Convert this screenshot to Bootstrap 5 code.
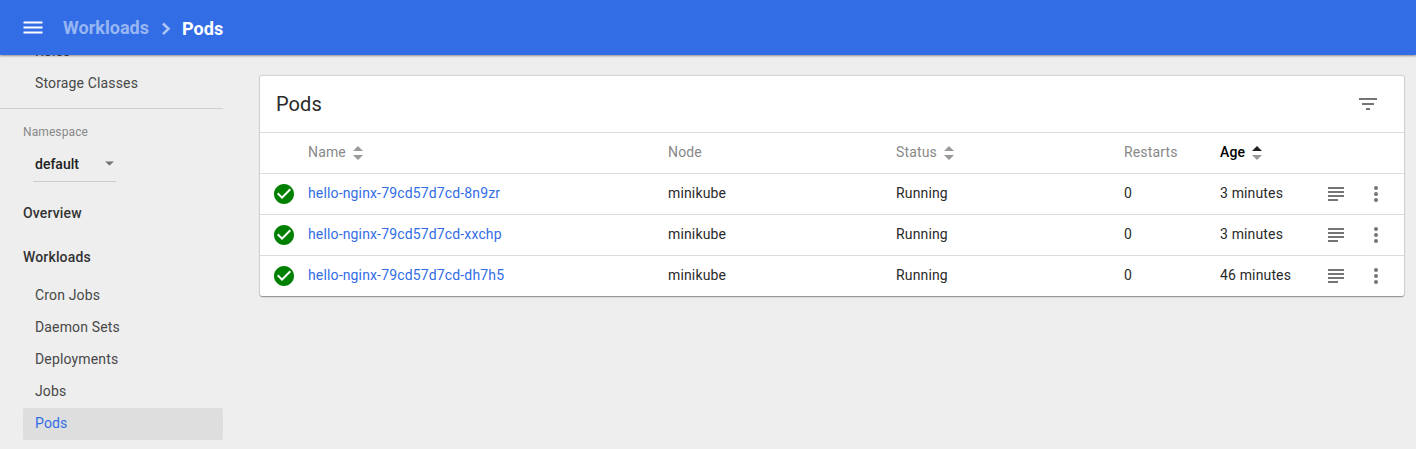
<!DOCTYPE html>
<html lang="en">
<head>
<meta charset="utf-8">
<meta name="viewport" content="width=device-width, initial-scale=1">
<title>Pods</title>
<link rel="stylesheet" href="https://cdn.jsdelivr.net/npm/bootstrap@5.3.0/dist/css/bootstrap.min.css">
<style>
body{font-family:Roboto,sans-serif;font-size:14px;line-height:20px;letter-spacing:.15px;background:#eee;color:#2a2a2a;height:100vh}
a{text-decoration:none;color:#326de6}
svg{display:block;flex:none}
.topbar{height:55px;background:#326de6;box-shadow:0 1px 2px rgba(0,0,0,.4);font-size:18px;font-weight:700;letter-spacing:.03px;padding-left:21px}
.topbar .parent-crumb{color:rgba(255,255,255,.5);margin-left:18px}
.topbar .crumb-arrow{margin:3px 5px 0 8px}
.topbar .this-crumb{padding-top:2px}
.side{width:223px;padding-left:23px;margin-top:-19px}
.side-item{height:32px;padding:0 0 2px 12px;color:#484848;border-radius:2px}
.side-item.active{background:#dedede;color:#326de6}
.side-head{font-weight:500;height:44px;color:#333;padding-bottom:2px}
.side-rule{height:1px;background:#d0d0d0;margin:8px 0 13px -23px}
.ns-label{font-size:12px;line-height:20px;letter-spacing:.1px;color:#888}
.ns-select{width:83px;height:40px;margin-left:10px;padding:4px 2px 0 2px;border-bottom:1px solid #ccc;font-weight:500;letter-spacing:0;color:#212121}
.side-gap{height:10px}
.panel{margin:21px 12px 0 37px;background:#fff;border-radius:2px;box-shadow:0 0 1px 1px rgba(0,0,0,.12),0 1px 1px 0 rgba(0,0,0,.25),0 2px 2px -1px rgba(0,0,0,.12)}
.panel-title{height:56px;padding:0 24px 0 16px;font-size:20px;letter-spacing:.1px}
.pod-row{display:grid;grid-template-columns:48px 360px 228px 228px 96px 104px 1fr;align-items:center;height:41px;border-top:1px solid #ddd;padding-bottom:2px}
.pod-row .state{margin:1px 0 0 12px}
.pod-row .actions{gap:30px;padding:2px 0 0 4px}
.col-title{color:#888}
.sorter{margin:1px 0 0 7px}
</style>
<script defer src="https://cdn.jsdelivr.net/npm/bootstrap@5.3.0/dist/js/bootstrap.bundle.min.js"></script>
</head>
<body class="d-flex flex-column overflow-hidden">
<svg class="d-none">
  <symbol id="ok" viewBox="0 0 24 24"><path fill="#008000" d="M12 2C6.480 2 2 6.480 2 12s4.480 10 10 10 10-4.480 10-10S17.520 2 12 2zm-2 15l-5-5 1.410-1.410L10 14.170l7.590-7.590L19 8l-9 9z"/></symbol>
  <symbol id="logs" viewBox="0 0 16 14"><path fill="#757575" d="M0 0h16v2H0zM0 4h16v2H0zM0 8h16v2H0zM0 12h10v2H0z"/></symbol>
  <symbol id="more" viewBox="0 0 4 16"><g fill="#757575"><circle cx="2" cy="2" r="2"/><circle cx="2" cy="8" r="2"/><circle cx="2" cy="14" r="2"/></g></symbol>
  <symbol id="down" viewBox="0 0 10 5"><path d="M0 0l5 5 5-5z"/></symbol>
</svg>
<header class="topbar d-flex align-items-center flex-shrink-0 position-relative z-1">
  <svg width="24" height="24" viewBox="0 0 24 24"><path fill="#fff" d="M2.500 17.500h19v-2h-19zm0-5h19v-2h-19zm0-5h19v-2h-19z"/></svg>
  <a href="#" class="parent-crumb">Workloads</a>
  <svg class="crumb-arrow" width="20" height="20" viewBox="0 0 20 20"><path fill="none" stroke="#fff" stroke-opacity=".6" stroke-width="2.600" d="M6 4.500l5.500 5.300L6 15.100"/></svg>
  <span class="this-crumb text-white">Pods</span>
</header>
<div class="d-flex flex-grow-1">
  <nav class="side flex-shrink-0">
    <a href="#" class="side-item d-flex align-items-center">Roles</a>
    <a href="#" class="side-item d-flex align-items-center">Storage Classes</a>
    <div class="side-rule"></div>
    <div class="ns-label">Namespace</div>
    <div class="ns-select d-flex align-items-center justify-content-between"><span>default</span><svg width="9" height="5" viewBox="0 0 10 5" fill="#757575"><use href="#down"/></svg></div>
    <div class="side-gap"></div>
    <a href="#" class="side-head d-flex align-items-center">Overview</a>
    <a href="#" class="side-head d-flex align-items-center">Workloads</a>
    <a href="#" class="side-item d-flex align-items-center">Cron Jobs</a>
    <a href="#" class="side-item d-flex align-items-center">Daemon Sets</a>
    <a href="#" class="side-item d-flex align-items-center">Deployments</a>
    <a href="#" class="side-item d-flex align-items-center">Jobs</a>
    <a href="#" class="side-item active d-flex align-items-center">Pods</a>
  </nav>
  <main class="flex-grow-1">
    <section class="panel">
      <div class="panel-title d-flex align-items-center justify-content-between"><span>Pods</span>
        <svg width="24" height="24" viewBox="0 0 24 24"><path fill="#757575" d="M10 18h4v-2h-4v2zM3 6v2h18V6H3zm3 7h12v-2H6v2z"/></svg></div>
      <div class="pod-row col-title">
        <span></span>
        <div class="d-flex align-items-center">Name<svg class="sorter" width="10" height="14" viewBox="0 0 10 14" fill="#999"><path d="M0 5L5 0l5 5zM0 9l5 5 5-5z"/></svg></div>
        <span>Node</span>
        <div class="d-flex align-items-center">Status<svg class="sorter" width="10" height="14" viewBox="0 0 10 14" fill="#999"><path d="M0 5L5 0l5 5zM0 9l5 5 5-5z"/></svg></div>
        <span>Restarts</span>
        <div class="d-flex align-items-center fw-medium text-black">Age<svg class="sorter" width="10" height="14" viewBox="0 0 10 14"><path fill="#212121" d="M0 5L5 0l5 5z"/><path fill="#999" d="M0 9l5 5 5-5z"/></svg></div>
      </div>
      <div class="pod-row"><svg class="state" width="24" height="24"><use href="#ok"/></svg><a href="#">hello-nginx-79cd57d7cd-8n9zr</a><span>minikube</span><span>Running</span><span>0</span><span>3 minutes</span><div class="actions d-flex align-items-center"><svg width="16" height="14"><use href="#logs"/></svg><svg width="4" height="16"><use href="#more"/></svg></div></div>
      <div class="pod-row"><svg class="state" width="24" height="24"><use href="#ok"/></svg><a href="#">hello-nginx-79cd57d7cd-xxchp</a><span>minikube</span><span>Running</span><span>0</span><span>3 minutes</span><div class="actions d-flex align-items-center"><svg width="16" height="14"><use href="#logs"/></svg><svg width="4" height="16"><use href="#more"/></svg></div></div>
      <div class="pod-row"><svg class="state" width="24" height="24"><use href="#ok"/></svg><a href="#">hello-nginx-79cd57d7cd-dh7h5</a><span>minikube</span><span>Running</span><span>0</span><span>46 minutes</span><div class="actions d-flex align-items-center"><svg width="16" height="14"><use href="#logs"/></svg><svg width="4" height="16"><use href="#more"/></svg></div></div>
    </section>
  </main>
</div>
</body>
</html>
